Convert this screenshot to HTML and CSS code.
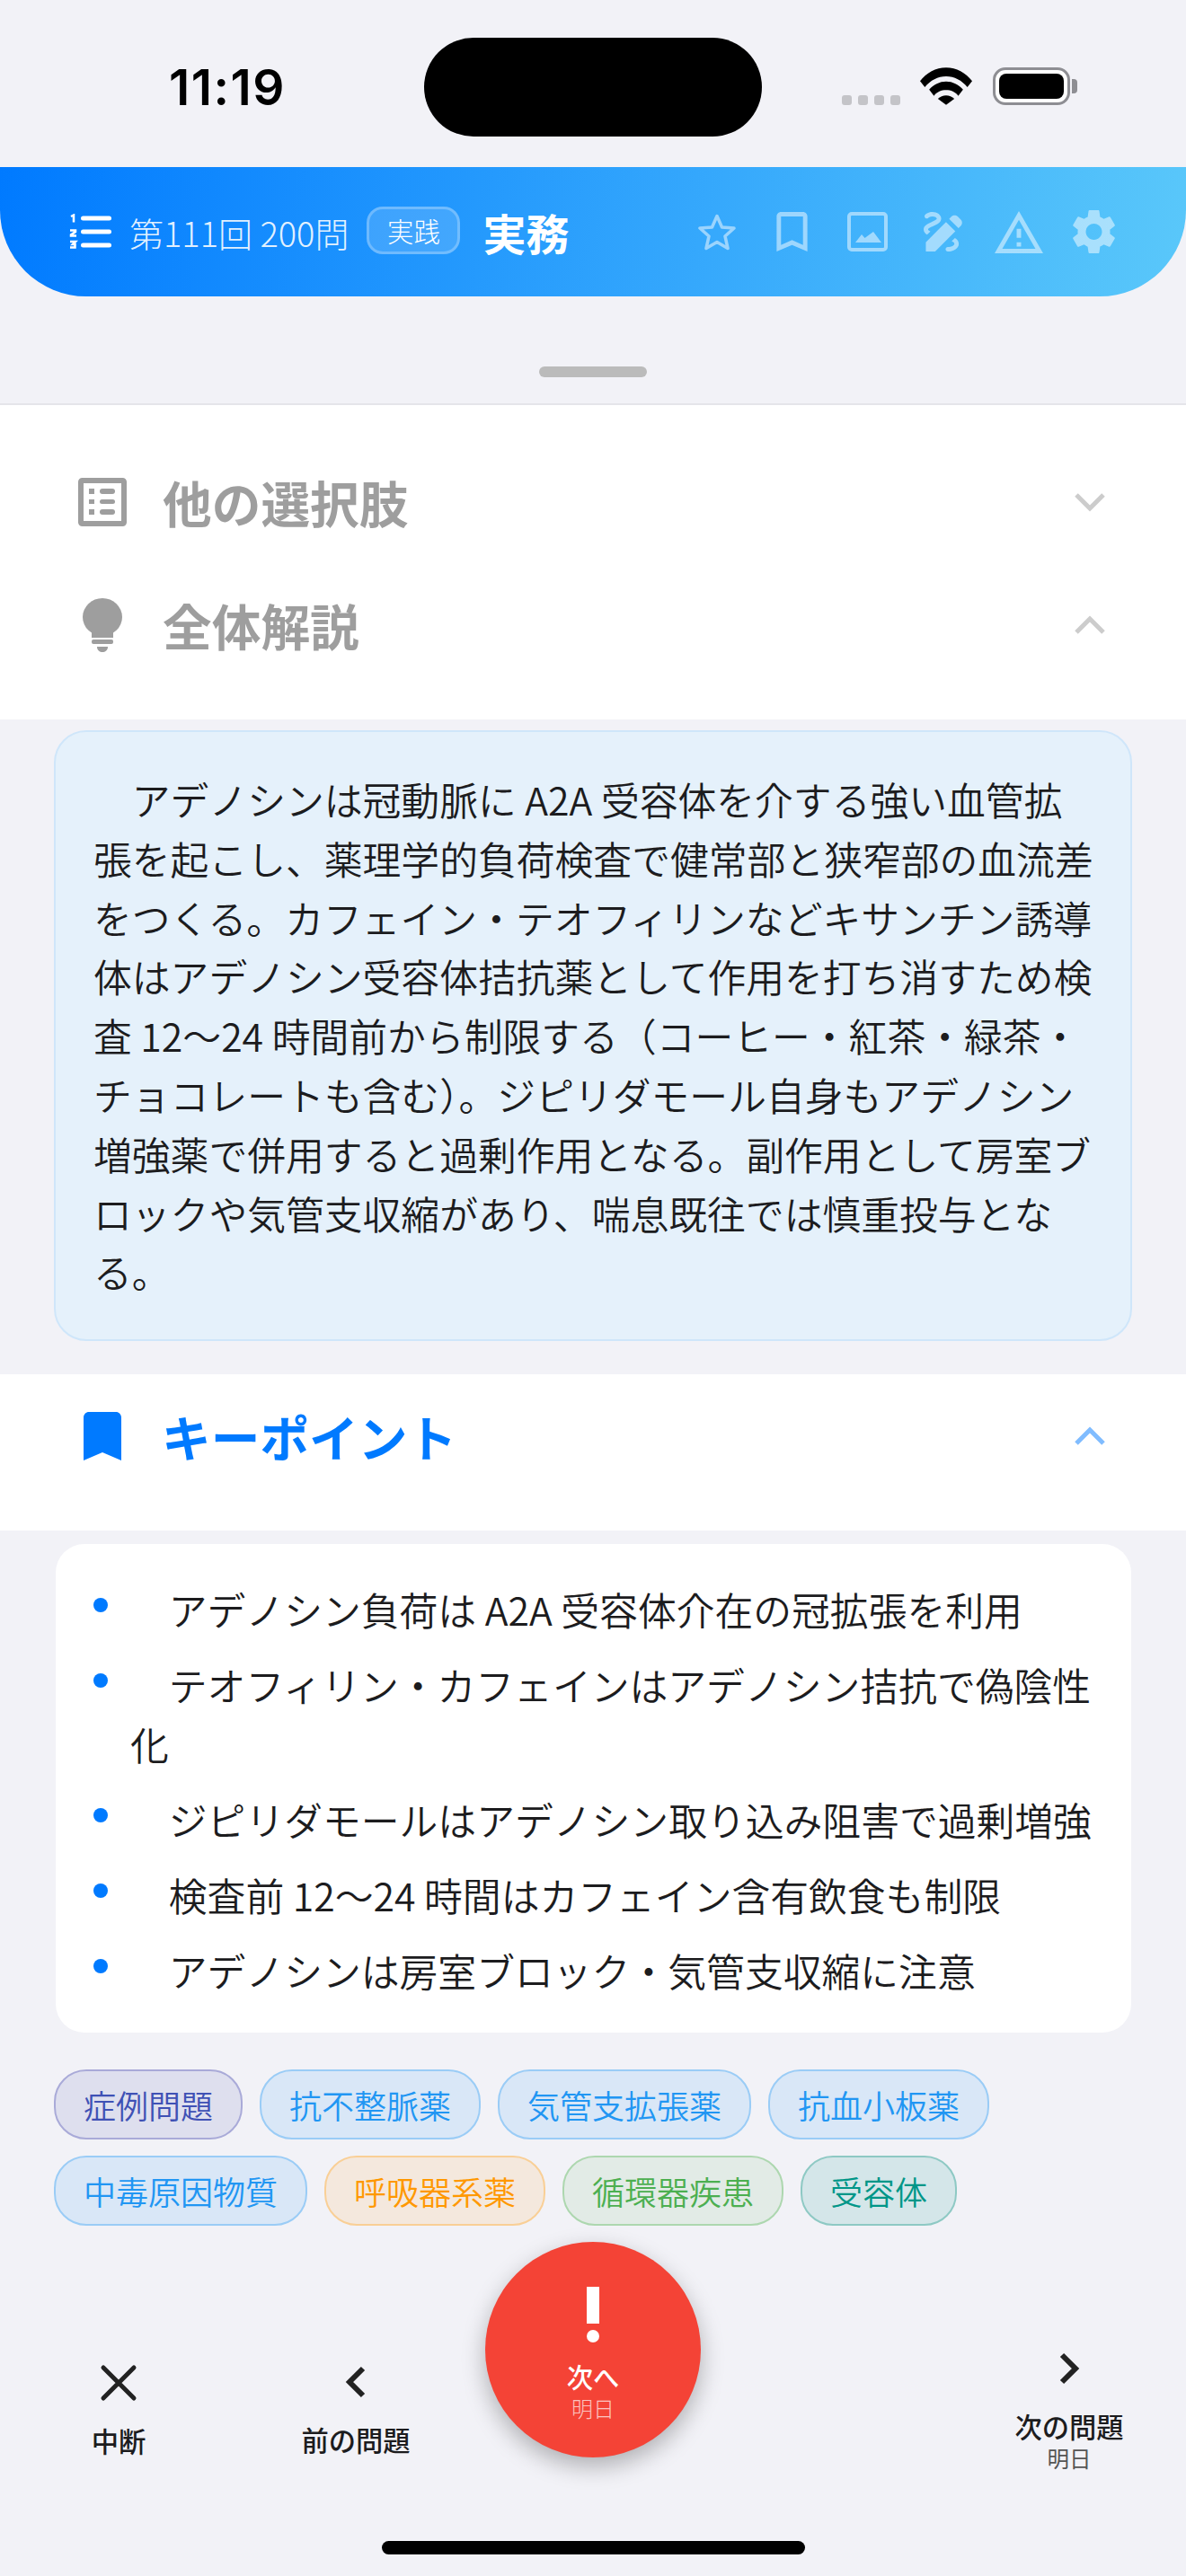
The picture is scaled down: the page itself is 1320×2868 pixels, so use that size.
FILE: index.html
```html
<!DOCTYPE html>
<html lang="ja">
<head>
    <meta charset="UTF-8">
    <meta name="viewport" content="width=device-width, initial-scale=1.0">
    <title>第111回 200問</title>
    <link rel="stylesheet" href="styles.css">
</head>
<body>
<div class="screen">
    <!-- ステータスバー -->
    <div class="status">
        <span class="time">11:19</span>
        <div class="island"></div>
        <div class="status-right">
            <div class="signal"><i></i><i></i><i></i><i></i></div>
            <svg class="wifi" viewBox="0 0 60 43"><path d="M0 15.500C7.500 6 18 0 30 0s22.500 6 30 15.500l-5.500 7C48 14.500 39.500 10 30 10S12 14.500 5.500 22.500z"/><path d="M10.500 25.500C15.500 19.500 22.500 16 30 16s14.500 3.500 19.500 9.500l-5.500 7C40.500 28 35.500 26 30 26s-10.500 2-14 6.500z"/><path d="M20.500 36C23 33.500 26.500 32 30 32s7 1.500 9.500 4L30 43z"/></svg>
            <div class="battery"><div class="battery-fill"></div></div>
        </div>
    </div>

    <!-- ヘッダー -->
    <header class="header">
        <svg class="ic-list" viewBox="0 0 48 40"><g fill="none" stroke="#fff" stroke-width="2.500"><path d="M2 3l3-1.500V9.500"/><path d="M1 18.500h6v1.500l-5 3.500v1h6"/><path d="M1 31h6l-3 3h2.500v3.500H1"/></g><g fill="#fff"><rect x="13" y="2.500" width="34" height="5" rx="2.500"/><rect x="13" y="17.500" width="34" height="5" rx="2.500"/><rect x="13" y="32.500" width="34" height="5" rx="2.500"/></g></svg>
        <span class="kai">第111回 200問</span>
        <span class="badge">実践</span>
        <span class="subject">実務</span>
        <div class="header-icons">
            <svg class="ic-star" viewBox="0 0 42 41"><path d="M21 2.500L26.500 15 40 16 30 25l3 13.500-12-7-12 7L12 25 2 16l13.500-1z" fill="none" stroke="#fff" stroke-width="3.500" stroke-linejoin="round"/></svg>
            <svg class="ic-mark" viewBox="5 3 14 18"><path fill="#fff" d="M17 3H7c-1.100 0-2 .9-2 2v16l7-3 7 3V5c0-1.100-.9-2-2-2zm0 15l-5-2.180L7 18V5h10v13z"/></svg>
            <svg class="ic-image" viewBox="0 0 45 44"><rect x="2" y="2" width="41" height="40" rx="3" fill="none" stroke="#fff" stroke-width="4"/><path d="M9 34l7-9 3.500 4L29 22l9 12z" fill="#fff"/></svg>
            <svg class="ic-draw" viewBox="3 3 18 18"><path fill="#fff" d="M18.850 10.390l1.060-1.060c.78-.78.78-2.050 0-2.830L18.500 5.090c-.78-.78-2.050-.78-2.830 0l-1.060 1.060 4.240 4.240zm-5.660-2.830L4 16.760V21h4.240l9.190-9.190-4.240-4.250zM19 17.500c0 2.190-2.540 3.500-5 3.500-.55 0-1-.45-1-1s.45-1 1-1c1.540 0 3-.73 3-1.500 0-.47-.48-.86-1.230-1.200l1.480-1.480c1.070.63 1.750 1.470 1.750 2.680zM4.580 13.350C3.610 12.790 3 12.060 3 11c0-1.800 1.890-2.630 3.560-3.360C7.590 7.180 9 6.560 9 6c0-.41-.78-1-2-1-1.260 0-1.800.61-1.830.64-.35.41-.98.46-1.400.12-.41-.34-.49-.95-.15-1.380C3.840 4.140 4.820 3 7 3s4 1.280 4 3c0 1.870-1.930 2.720-3.640 3.470C6.420 9.880 5 10.500 5 11c0 .31.43.6 1.070.86l-1.490 1.490z"/></svg>
            <svg class="ic-warn" viewBox="1 2 22 19" preserveAspectRatio="none"><path fill="#fff" d="M12 5.990L19.530 19H4.470L12 5.990M12 2L1 21h22L12 2zm1 14h-2v2h2v-2zm0-6h-2v4h2v-4z"/></svg>
            <svg class="ic-gear" viewBox="2.500 2 19 20"><path fill="#fff" d="M19.140 12.940c.04-.3.06-.61.06-.94 0-.32-.02-.64-.07-.94l2.030-1.580c.18-.14.23-.41.12-.61l-1.920-3.320c-.12-.22-.37-.29-.59-.22l-2.390.96c-.5-.38-1.030-.7-1.620-.94l-.36-2.540c-.04-.24-.24-.41-.48-.41h-3.840c-.24 0-.43.17-.47.41l-.36 2.540c-.59.24-1.130.57-1.620.94l-2.390-.96c-.22-.08-.47 0-.59.22L2.740 8.870c-.12.21-.08.47.12.61l2.030 1.580c-.05.3-.09.63-.09.94s.02.64.07.94l-2.030 1.580c-.18.14-.23.41-.12.61l1.920 3.320c.12.22.37.29.59.22l2.390-.96c.5.38 1.030.7 1.620.94l.36 2.540c.05.24.24.41.48.41h3.840c.24 0 .44-.17.47-.41l.36-2.540c.59-.24 1.130-.56 1.620-.94l2.390.96c.22.08.47 0 .59-.22l1.920-3.320c.12-.22.07-.47-.12-.61l-2.010-1.580zM12 15.600c-1.980 0-3.600-1.620-3.600-3.600s1.620-3.600 3.600-3.600 3.600 1.620 3.600 3.600-1.620 3.600-3.600 3.600z"/></svg>
        </div>
    </header>

    <div class="handle-area"><div class="handle"></div></div>

    <!-- 折りたたみ -->
    <section class="acc acc-top">
        <div class="acc-row">
            <svg class="acc-ic ic-sheet" viewBox="0 0 54 54"><rect x="3" y="3" width="48" height="48" rx="1.500" fill="none" stroke="#9e9e9e" stroke-width="6"/><g fill="#9e9e9e"><rect x="12" y="12" width="6" height="6"/><rect x="12" y="24" width="6" height="5"/><rect x="12" y="35" width="6" height="6"/><rect x="24" y="12" width="17" height="6" rx="3"/><rect x="24" y="24" width="17" height="5" rx="2.500"/><rect x="24" y="35" width="17" height="6" rx="3"/></g></svg>
            <h2 class="acc-title">他の選択肢</h2>
            <svg class="chev" viewBox="0 0 38 24"><path d="M4 4l15 15L34 4" fill="none" stroke="#ccc" stroke-width="5"/></svg>
        </div>
        <div class="acc-row">
            <svg class="acc-ic ic-bulb" viewBox="0 0 44 60"><ellipse cx="22" cy="21" rx="22" ry="21" fill="#9e9e9e"/><path d="M10 36h24v8H10z" fill="#9e9e9e"/><rect x="10" y="46" width="24" height="5" rx="2" fill="#9e9e9e"/><path d="M16 54h12c0 4-3 6-6 6s-6-2-6-6z" fill="#9e9e9e"/></svg>
            <h2 class="acc-title">全体解説</h2>
            <svg class="chev" viewBox="0 0 38 24"><path d="M4 20L19 5l15 15" fill="none" stroke="#ccc" stroke-width="5"/></svg>
        </div>
    </section>

    <div class="explain">
        <p>アデノシンは冠動脈に A2A 受容体を介する強い血管拡張を起こし、薬理学的負荷検査で健常部と狭窄部の血流差をつくる。カフェイン・テオフィリンなどキサンチン誘導体はアデノシン受容体拮抗薬として作用を打ち消すため検査 12〜24 時間前から制限する（コーヒー・紅茶・緑茶・チョコレートも含む）。ジピリダモール自身もアデノシン増強薬で併用すると過剰作用となる。副作用として房室ブロックや気管支収縮があり、喘息既往では慎重投与となる。</p>
    </div>

    <section class="acc acc-key">
        <div class="acc-row">
            <svg class="acc-ic ic-key" viewBox="5 3 14 18"><path d="M17 3H7c-1.100 0-2 .9-2 2v16l7-3 7 3V5c0-1.100-.9-2-2-2z" fill="#007aff"/></svg>
            <h2 class="acc-title blue">キーポイント</h2>
            <svg class="chev" viewBox="0 0 38 24"><path d="M4 20L19 5l15 15" fill="none" stroke="#80bcff" stroke-width="5"/></svg>
        </div>
    </section>

    <ul class="points">
        <li>アデノシン負荷は A2A 受容体介在の冠拡張を利用</li>
        <li>テオフィリン・カフェインはアデノシン拮抗で偽陰性化</li>
        <li>ジピリダモールはアデノシン取り込み阻害で過剰増強</li>
        <li>検査前 12〜24 時間はカフェイン含有飲食も制限</li>
        <li>アデノシンは房室ブロック・気管支収縮に注意</li>
    </ul>

    <div class="tags">
        <span class="tag indigo">症例問題</span>
        <span class="tag sky">抗不整脈薬</span>
        <span class="tag sky">気管支拡張薬</span>
        <span class="tag sky">抗血小板薬</span>
        <span class="tag sky">中毒原因物質</span>
        <span class="tag orange">呼吸器系薬</span>
        <span class="tag green">循環器疾患</span>
        <span class="tag teal">受容体</span>
    </div>

    <!-- 下のナビ -->
    <nav class="nav">
        <div class="nav-item nav-stop">
            <svg class="nav-x" viewBox="0 0 42 42"><path d="M4 4l34 34M38 4L4 38" fill="none" stroke="#222" stroke-width="5" stroke-linecap="round"/></svg>
            <span class="nav-label">中断</span>
        </div>
        <div class="nav-item nav-prev">
            <svg class="nav-chev" viewBox="0 0 24 36"><path d="M20 3L5 18l15 15" fill="none" stroke="#222" stroke-width="6"/></svg>
            <span class="nav-label">前の問題</span>
        </div>
        <div class="nav-item nav-next">
            <svg class="nav-chev" viewBox="0 0 24 36"><path d="M4 3l15 15L4 33" fill="none" stroke="#222" stroke-width="6"/></svg>
            <span class="nav-label">次の問題</span>
            <span class="nav-sub">明日</span>
        </div>
        <button class="fab">
            <svg class="fab-mark" viewBox="0 0 16 62"><rect x="1" width="14" height="41" fill="#fff"/><circle cx="8" cy="55" r="7" fill="#fff"/></svg>
            <span class="fab-label">次へ</span>
            <span class="fab-sub">明日</span>
        </button>
    </nav>

    <div class="home-bar"></div>
</div>
</body>
</html>
```

FILE: styles.css
```css
* {
    box-sizing: border-box;
}
body {
    margin: 0;
    background-color: #f2f2f7;
    font-family: "Noto Sans CJK JP", "Noto Sans", sans-serif;
    color: #1c1c1e;
}
svg {
    display: block;
    flex: none;
}
.screen {
    width: 1320px;
    height: 2868px;
    overflow: hidden;
}

/* status */
.status {
    height: 186px;
    display: flex;
    padding: 42px 0 0 188px;
}
.time {
    width: 284px;
    font-family: "Inter", "Liberation Sans", sans-serif;
    font-weight: 600;
    font-size: 55px;
    line-height: 110px;
    letter-spacing: 1.500px;
    color: #000;
}
.island {
    width: 376px;
    height: 110px;
    border-radius: 55px;
    background-color: #000;
}
.status-right {
    height: 75px;
    margin-left: 89px;
    padding-top: 33px;
    display: flex;
    align-items: flex-end;
}
.signal {
    display: flex;
    gap: 7px;
}
.signal i {
    width: 11px;
    height: 11px;
    border-radius: 3px;
    background-color: #c4c4c8;
}
.wifi {
    width: 58px;
    height: 42px;
    margin-left: 22px;
}
.battery {
    position: relative;
    width: 86px;
    height: 42px;
    margin-left: 23px;
    padding: 4px;
    border: 3px solid #8e8e93;
    border-radius: 14px;
    background-color: #fff;
}
.battery::after {
    content: "";
    position: absolute;
    right: -11px;
    top: 10px;
    width: 6px;
    height: 16px;
    border-radius: 0 4px 4px 0;
    background-color: #8e8e93;
}
.battery-fill {
    height: 100%;
    border-radius: 8px;
    background-color: #000;
}

/* header */
.header {
    height: 144px;
    padding-left: 77px;
    display: flex;
    align-items: center;
    background: linear-gradient(100deg, #007aff, #5ac8fa);
    border-radius: 0 0 96px 96px;
}
.ic-list {
    width: 48px;
    height: 40px;
    margin-top: -1px;
}
.kai {
    margin-left: 19px;
    font-size: 38px;
    font-weight: 300;
    color: rgba(255, 255, 255, 0.9);
    white-space: nowrap;
}
.badge {
    width: 104px;
    height: 53px;
    margin-left: 20px;
    margin-top: -3px;
    border: 3px solid rgba(255, 255, 255, 0.25);
    border-radius: 18px;
    background-color: rgba(255, 255, 255, 0.15);
    color: #fff;
    font-size: 29.300px;
    font-weight: 300;
    line-height: 47px;
    text-align: center;
}
.subject {
    margin-left: 25px;
    font-size: 48px;
    font-weight: 700;
    color: #fff;
}
.header-icons {
    margin-left: auto;
    padding-right: 78px;
    display: flex;
    align-items: center;
    opacity: 0.5;
}
.ic-star { width: 42px; height: 41px; }
.ic-mark { width: 35px; height: 44px; margin-left: 45px; }
.ic-image { width: 45px; height: 44px; margin-left: 44px; }
.ic-draw { width: 44px; height: 44px; margin-left: 40px; }
.ic-warn { width: 54px; height: 47px; margin-left: 35px; }
.ic-gear { width: 49px; height: 50px; margin-left: 32px; }

.handle-area {
    height: 121px;
    padding-top: 78px;
    border-bottom: 2px solid #e5e5ea;
}
.handle {
    width: 120px;
    height: 12px;
    margin: 0 auto;
    border-radius: 6px;
    background-color: #bbb;
}

/* accordion */
.acc {
    background-color: #fff;
}
.acc-top {
    height: 350px;
    padding-top: 39px;
}
.acc-key {
    height: 174px;
    margin-top: 37px;
}
.acc-row {
    height: 137px;
    padding-right: 88px;
    display: flex;
    align-items: center;
}
.acc-ic {
    margin-left: 87px;
}
.ic-sheet { width: 54px; height: 54px; }
.ic-bulb { width: 44px; height: 60px; margin-left: 92px; margin-right: 5px; }
.ic-key { width: 42px; height: 54px; margin-left: 93px; margin-right: 5px; }
.acc-title {
    margin: 0 0 0 40px;
    font-size: 54.700px;
    font-weight: 600;
    line-height: 80px;
    color: #9e9e9e;
}
.blue {
    color: #007aff;
}
.chev {
    width: 38px;
    height: 24px;
    margin-left: auto;
}

.explain {
    margin: 12px 60px 0;
    padding: 42px 40px 0 42px;
    height: 680px;
    background-color: #e5f1fb;
    border: 2px solid #cfe6fa;
    border-radius: 36px;
}
.explain p {
    margin: 0;
    font-size: 42.800px;
    font-weight: 350;
    line-height: 65.800px;
    text-indent: 1em;
}

.points {
    list-style: none;
    margin: 15px 61px 0 62px;
    padding: 39px 42px 0 83px;
    height: 544px;
    background-color: #fff;
    border-radius: 32px;
}
.points li {
    position: relative;
    margin-bottom: 18px;
    font-size: 42.800px;
    font-weight: 350;
    line-height: 66px;
    text-indent: 1em;
}
.points li::before {
    content: "";
    position: absolute;
    left: -41px;
    top: 21px;
    width: 16px;
    height: 16px;
    border-radius: 50%;
    background-color: #007aff;
}

.tags {
    margin: 41px 180px 0 60px;
    display: flex;
    flex-wrap: wrap;
    gap: 18px 19px;
}
.tag {
    height: 78px;
    padding: 0 31px;
    border: 2px solid;
    border-radius: 36px;
    font-size: 36px;
    font-weight: 350;
    line-height: 74px;
}
.indigo { color: #3f51b5; background-color: #dedfee; border-color: #a9aad8; }
.sky { color: #2196f3; background-color: #d9e7f7; border-color: #9accf6; }
.orange { color: #ff9800; background-color: #f4e8dd; border-color: #f9cf96; }
.green { color: #4caf50; background-color: #e2ebe6; border-color: #add7af; }
.teal { color: #009688; background-color: #d4e6e9; border-color: #8ec9c4; }

/* nav */
.nav {
    position: relative;
    height: 351px;
    padding: 0 60px 0 62px;
    display: flex;
    align-items: flex-start;
}
.nav-item {
    width: 140px;
    display: flex;
    flex-direction: column;
    align-items: center;
}
.nav-stop { margin-top: 154px; }
.nav-prev { margin-top: 156px; margin-left: 124px; }
.nav-next { margin-top: 141px; margin-left: auto; }
.nav-x { width: 42px; height: 42px; }
.nav-chev { width: 24px; height: 36px; }
.nav-label {
    margin-top: 24px;
    font-size: 30.300px;
    font-weight: 500;
    line-height: 44px;
    white-space: nowrap;
}
.nav-stop .nav-label { margin-top: 21px; }
.nav-sub {
    font-size: 24.500px;
    line-height: 28px;
    color: #555;
}
.fab {
    position: absolute;
    left: 540px;
    top: 18px;
    width: 240px;
    height: 240px;
    padding: 50px 0 0;
    border: none;
    border-radius: 50%;
    background-color: #f44336;
    box-shadow: 0 10px 26px rgba(0, 0, 0, 0.28);
    display: flex;
    flex-direction: column;
    align-items: center;
    font-family: inherit;
}
.fab-mark {
    width: 16px;
    height: 62px;
}
.fab-label {
    margin-top: 19px;
    font-size: 29.300px;
    font-weight: 500;
    line-height: 36px;
    color: #fff;
}
.fab-sub {
    margin-top: 4px;
    font-size: 24px;
    font-weight: 300;
    line-height: 28px;
    color: rgba(255, 255, 255, 0.7);
}
.home-bar {
    width: 471px;
    height: 15px;
    margin: 0 auto;
    border-radius: 8px;
    background-color: #000;
}
```
